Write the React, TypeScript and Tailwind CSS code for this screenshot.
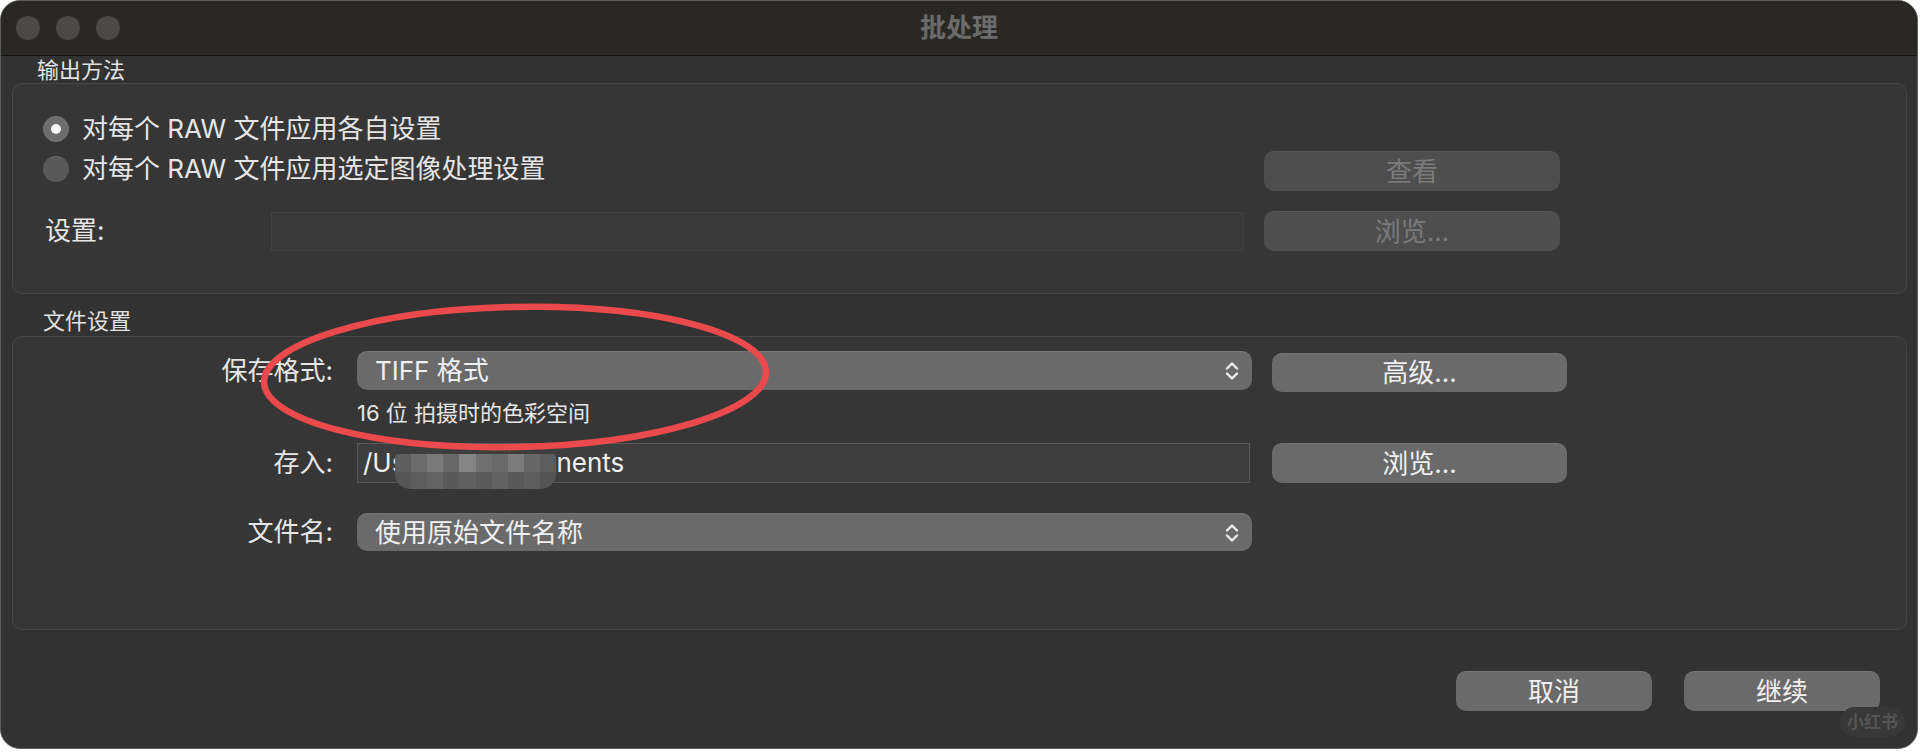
import React from "react";

const FONT = "font-['Inter','Noto_Sans_CJK_SC',sans-serif]";

const Chevrons = () => (
  <svg width="16" height="24" viewBox="0 0 16 24" fill="none" stroke="#ebebeb" strokeWidth="2.4" strokeLinecap="round" strokeLinejoin="round">
    <path d="M3 9.5 L8 4.5 L13 9.5" />
    <path d="M3 14.5 L8 19.5 L13 14.5" />
  </svg>
);

const Radio = ({ checked }: { checked?: boolean }) =>
  checked ? (
    <div className="w-[26px] h-[26px] shrink-0 rounded-full bg-[#6d6d6d] border border-[#7a7a7a] flex items-center justify-center">
      <div className="w-[10px] h-[10px] rounded-full bg-[#f4f4f4]" />
    </div>
  ) : (
    <div className="w-[26px] h-[26px] shrink-0 rounded-full bg-[#595959] border-t border-[#6a6a6a]" />
  );

const Btn = ({ children, disabled, className = "" }: { children: React.ReactNode; disabled?: boolean; className?: string }) => (
  <div
    className={
      "shrink-0 rounded-[10px] flex items-center justify-center text-[26px] leading-none " +
      (disabled
        ? "bg-[#4e4e4e] text-[#7b7b7b] border-t border-[#575757] "
        : "bg-[#6a6a6a] text-[#f0f0f0] border-t border-[#777777] ") +
      className
    }
  >
    {children}
  </div>
);

const Select = ({ children, className = "" }: { children: React.ReactNode; className?: string }) => (
  <div className={"shrink-0 rounded-[10px] bg-[#6a6a6a] border-t border-[#777777] flex items-center justify-between pl-[18px] pr-[12px] text-[26px] text-[#f0f0f0] " + className}>
    <span className="leading-none">{children}</span>
    <Chevrons />
  </div>
);

const mosaicTop = ["#5f5f5f", "#6c6c6c", "#7a7a7a", "#686868", "#848484", "#707070", "#6a6a6a", "#7c7c7c", "#676767", "#5d5d5d"];
const mosaicBot = ["#565656", "#5d5d5d", "#636363", "#595959", "#606060", "#5a5a5a", "#626262", "#595959", "#5e5e5e", "#555555"];

export default function App() {
  return (
    <div className={"relative w-[1920px] h-[752px] bg-white overflow-hidden " + FONT}>
      <div className="w-[1918px] h-[749px] rounded-[20px] border border-[#5e5e5e] bg-[#323232] overflow-hidden flex flex-col">
        {/* title bar */}
        <div className="h-[55px] shrink-0 bg-[#2a2825] border-b border-[#121212] grid grid-cols-[1fr_auto_1fr] items-center">
          <div className="flex gap-[16px] pl-[15px]">
            <div className="w-[24px] h-[24px] rounded-full bg-[#4b4a48]" />
            <div className="w-[24px] h-[24px] rounded-full bg-[#4b4a48]" />
            <div className="w-[24px] h-[24px] rounded-full bg-[#4b4a48]" />
          </div>
          <div className="text-[26px] font-bold text-[#6b6b6b] leading-none">批处理</div>
          <div />
        </div>

        {/* body */}
        <div className="flex-1 pl-[11px] pr-[10px] flex flex-col">
          <div className="h-[26px] mt-[1px] pl-[25px] text-[22px] leading-[26px] text-[#e2e2e2]">输出方法</div>

          {/* box 1 */}
          <div className="h-[211px] shrink-0 rounded-[10px] border border-[#474747] bg-[#363636] pl-[30px] pt-[25px] flex flex-col">
            <div className="h-[40px] flex items-center">
              <Radio checked />
              <span className="ml-[13px] text-[26px] leading-none text-[#e6e6e6]">对每个 RAW 文件应用各自设置</span>
            </div>
            <div className="h-[40px] mt-[2px] flex items-start">
              <div className="w-[1201px] h-[36px] flex items-center">
                <Radio />
                <span className="ml-[13px] text-[26px] leading-none text-[#e6e6e6]">对每个 RAW 文件应用选定图像处理设置</span>
              </div>
              <Btn disabled className="ml-[20px] w-[296px] h-[40px]">查看</Btn>
            </div>
            <div className="h-[40px] mt-[20px] flex items-center">
              <div className="w-[228px] pl-[2px] text-[26px] leading-none text-[#e6e6e6]">设置:</div>
              <div className="w-[973px] h-[39px] mt-[1px] bg-[#393939] border border-[#414141]" />
              <Btn disabled className="ml-[20px] w-[296px] h-[40px]">浏览...</Btn>
            </div>
          </div>

          <div className="h-[26px] mt-[14px] mb-[2px] pl-[31px] text-[22px] leading-[26px] text-[#e2e2e2]">文件设置</div>

          {/* box 2 */}
          <div className="h-[294px] shrink-0 rounded-[10px] border border-[#474747] bg-[#363636] pt-[14px] flex flex-col">
            <div className="flex items-start">
              <div className="w-[320px] h-[39px] flex items-center justify-end text-[26px] leading-none text-[#e6e6e6]">保存格式:</div>
              <Select className="ml-[24px] w-[895px] h-[39px]">TIFF 格式</Select>
              <Btn className="ml-[20px] mt-[2px] w-[295px] h-[39px]">高级...</Btn>
            </div>
            <div className="mt-[8px] pl-[344px] h-[26px] text-[22px] leading-[26px] text-[#e6e6e6]">16 位 拍摄时的色彩空间</div>
            <div className="mt-[17px] flex items-center">
              <div className="w-[320px] h-[40px] flex items-center justify-end text-[26px] leading-none text-[#e6e6e6]">存入:</div>
              <div className="relative ml-[24px] w-[893px] h-[40px] bg-[#3e3e3e] border border-[#595959] flex items-center pl-[5px] text-[26px] leading-none text-[#f0f0f0]">
                <span>/Us</span>
                <span className="inline-block w-[151px]" />
                <span>nents</span>
                <div className="absolute left-[37px] top-[10px] w-[161px] h-[35px] rounded-t-[4px] rounded-b-[15px] overflow-hidden grid grid-cols-10 grid-rows-2">
                  {mosaicTop.map((c, i) => (
                    <div key={"t" + i} style={{ backgroundColor: c }} />
                  ))}
                  {mosaicBot.map((c, i) => (
                    <div key={"b" + i} style={{ backgroundColor: c }} />
                  ))}
                </div>
              </div>
              <Btn className="ml-[22px] w-[295px] h-[40px]">浏览...</Btn>
            </div>
            <div className="mt-[30px] flex items-center">
              <div className="w-[320px] h-[38px] flex items-center justify-end text-[26px] leading-none text-[#e6e6e6]">文件名:</div>
              <Select className="ml-[24px] w-[895px] h-[38px]">使用原始文件名称</Select>
            </div>
          </div>

          {/* bottom buttons */}
          <div className="mt-[41px] flex justify-end gap-[32px] pr-[27px]">
            <Btn className="w-[196px] h-[40px]">取消</Btn>
            <Btn className="w-[196px] h-[40px]">继续</Btn>
          </div>
        </div>
      </div>

      {/* red annotation ellipse */}
      <svg className="absolute left-0 top-0 pointer-events-none" width="1920" height="752" viewBox="0 0 1920 752">
        <ellipse cx="515" cy="377" rx="251" ry="70" fill="none" stroke="#ea4a4c" strokeWidth="6.5" transform="rotate(-1.2 515 377)" />
      </svg>

      {/* watermark */}
      <div className="absolute left-[1840px] top-[707px] w-[65px] h-[30px] rounded-full bg-[#383838] flex items-center justify-center text-[17px] font-bold text-[#555555] leading-none">
        小红书
      </div>
    </div>
  );
}
